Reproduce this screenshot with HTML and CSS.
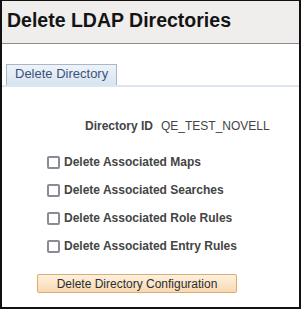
FILE: index.html
```html
<!DOCTYPE html>
<html lang="en">
<head>
    <meta charset="UTF-8">
    <meta name="viewport" content="width=device-width, initial-scale=1.0">
    <title>Delete LDAP Directories</title>
    <link rel="stylesheet" href="styles.css">
</head>
<body>
    <div class="page">
        <div class="page-header">
            <h1>Delete LDAP Directories</h1>
        </div>
        <div class="tabs">
            <div class="tab active">Delete Directory</div>
        </div>
        <form class="delete-form">
            <div class="field">
                <span class="field-label">Directory ID</span>
                <span class="field-value">QE_TEST_NOVELL</span>
            </div>
            <div class="options">
                <label class="option"><input type="checkbox" name="maps"> Delete Associated Maps</label>
                <label class="option"><input type="checkbox" name="searches"> Delete Associated Searches</label>
                <label class="option"><input type="checkbox" name="role-rules"> Delete Associated Role Rules</label>
                <label class="option"><input type="checkbox" name="entry-rules"> Delete Associated Entry Rules</label>
            </div>
            <div class="actions">
                <button type="button">Delete Directory Configuration</button>
            </div>
        </form>
    </div>
</body>
</html>
```

FILE: styles.css
```css
body {
    margin: 0;
    padding: 0;
    font-family: "Liberation Sans", Arial, sans-serif;
    background-color: #fff;
}

.page {
    box-sizing: border-box;
    height: 309px;
    border: 2px solid #111;
    border-top-width: 1px;
    overflow: hidden;
}

.page-header {
    background-color: #efeeed;
    border-bottom: 1px solid #8c8b89;
    padding: 7px 5px 11px;
}

.page-header h1 {
    margin: 0;
    font-size: 19.5px;
    line-height: 24px;
    font-weight: bold;
    color: #141414;
}

.tabs {
    display: flex;
    margin-top: 20px;
    padding-left: 4px;
    border-bottom: 2px solid #dce6f2;
}

.tab {
    padding: 0 8px 3px;
    font-size: 13px;
    line-height: 17px;
    color: #3a5378;
    border: 1px solid #a9b6c8;
    border-bottom: none;
    background: linear-gradient(#eef3f9, #d8e4f2);
}

.delete-form {
    margin: 0;
    font-size: 12px;
    color: #444;
}

.field {
    display: flex;
    gap: 8px;
    margin-top: 32px;
    line-height: 14px;
}

.field-label {
    width: 151px;
    text-align: right;
    font-weight: bold;
}

.options {
    display: flex;
    flex-direction: column;
    margin-top: 15px;
    padding-left: 45px;
}

.option {
    display: flex;
    align-items: center;
    gap: 4px;
    height: 28px;
    font-weight: bold;
}

.option input {
    appearance: none;
    box-sizing: border-box;
    width: 13px;
    height: 13px;
    margin: 0;
    border: 2px solid #8b8b97;
    border-radius: 2px;
    background-color: #fff;
}

.actions {
    margin-top: 14px;
    padding-left: 35px;
}

.actions button {
    box-sizing: border-box;
    width: 200px;
    height: 19px;
    padding: 0;
    font-family: "Liberation Sans", Arial, sans-serif;
    font-size: 12px;
    color: #2e2e2e;
    border: 1px solid #deab6f;
    border-radius: 2px;
    background: linear-gradient(#fdf0de, #f8dab2);
}
```
